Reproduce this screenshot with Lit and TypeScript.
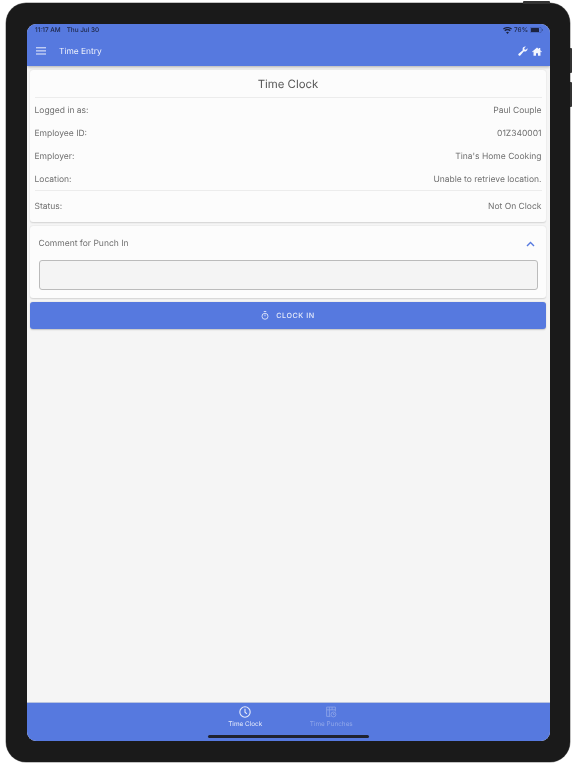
import { LitElement, html, css } from "lit";
import { customElement } from "lit/decorators.js";

@customElement("app-root")
export class AppRoot extends LitElement {
  static styles = css`
    :host { display: block; width: 576px; height: 768px; background: #fff; position: relative; overflow: hidden;
      font-family: Inter, "Liberation Sans", sans-serif; color: #666; text-rendering: geometricPrecision; }
    * { box-sizing: border-box; }
    .outer { padding: 3px 6px 6px 6px; height: 768px; filter: blur(.25px); }
    .device { height: 759px; background: #1a1a1a; border-radius: 20px; padding: 21px 20px 21px 20.5px; box-shadow: 0 0 0 .5px #888; }
    .screen { height: 717px; border-radius: 9px; overflow: hidden; background: #f5f5f5; display: flex; flex-direction: column; }
    .btn { position: absolute; background: #333; }
    .b-top { left: 523px; top: 1px; width: 27px; height: 3px; border-radius: 1px 1px 0 0; }
    .b-v1 { left: 570px; top: 48px; width: 2px; height: 25px; border-radius: 0 1px 1px 0; }
    .b-v2 { left: 570px; top: 81.5px; width: 2px; height: 25px; border-radius: 0 1px 1px 0; }
    .head { height: 42px; background: #5679df; flex: none; box-shadow: 0 1px 3px rgba(0,0,0,.3); position: relative; z-index: 1; }
    .status { height: 12px; display: flex; align-items: center; justify-content: space-between; padding: 0 7px 0 8.5px; font-size: 6.4px; font-weight: 500; color: #1c2340; }
    .status .l { display: flex; gap: 6px; }
    .status .r { display: flex; align-items: center; gap: 2px; }
    .bar { height: 30px; display: flex; align-items: center; padding: 0 8px 0 9.5px; color: #eef1fc; font-size: 8.4px; }
    .bar .title { margin-left: 13px; flex: 1; padding-top: 1px; }
    .bar .icons { display: flex; gap: 4px; align-items: center; padding-right: .5px; }
    .content { flex: 1; padding: 4px 4px 4px 3.5px; display: flex; flex-direction: column; gap: 4px; }
    .card { background: #fcfcfc; border-radius: 3px; box-shadow: 0 .5px 1.5px rgba(0,0,0,.14); }
    .c1 { height: 152px; padding: 0 4.5px; font-size: 8.5px; }
    .c1 h1 { margin: 0; height: 28px; font-size: 11.4px; font-weight: 400; text-align: center; line-height: 28px; color: #555; border-bottom: .5px solid #ececec; }
    .row { height: 23px; display: flex; justify-content: space-between; align-items: center; color: #707070; padding-top: 2.5px; }
    .rows { border-bottom: .5px solid #ececec; }
    .status-row { height: 31px; padding-top: 1.5px; }
    .c2 { height: 72px; padding: 0 8.5px; }
    .c2 .h { height: 33.5px; display: flex; justify-content: space-between; align-items: center; font-size: 8.5px; color: #707070; padding-right: 3px; padding-top: 2.5px; }
    .input { height: 30px; background: #f4f4f4; border: 1px solid #bbb; border-radius: 3px; }
    .clock { height: 27px; background: #5679df; border-radius: 3px; color: #e9edfb; font-size: 7.2px; font-weight: 500; letter-spacing: .55px;
      display: flex; align-items: center; justify-content: center; gap: 7px; box-shadow: 0 .5px 1.5px rgba(0,0,0,.2); }
    .tabs { height: 39px; flex: none; background: #5679df; border-top: .5px solid #b9c4e0; display: flex; justify-content: center; position: relative; }
    .tab { width: 86px; display: flex; flex-direction: column; align-items: center; padding-top: 3px; font-size: 6.4px; color: #e8ecfb; gap: 1.5px; }
    .tab.off { color: #91a7e9; }
    .home { position: absolute; left: 181.5px; bottom: 3px; width: 161px; height: 3px; border-radius: 2px; background: #1f2230; }
  `;

  render() {
    return html`
      <div class="outer">
        <div class="device">
          <div class="screen">
            <div class="head">
              <div class="status">
                <div class="l"><span>11:17 AM</span><span>Thu Jul 30</span></div>
                <div class="r">
                  <svg width="9" height="7" viewBox="0 0 18 14" fill="#1c2340"><path d="M9 14 L6 10.400 A5 5 0 0 1 12 10.400 Z M4.500 8.600 L2.600 6.400 A10 10 0 0 1 15.400 6.400 L13.500 8.600 A7 7 0 0 0 4.500 8.600 Z M1.600 5.200 L0 3.200 A14 14 0 0 1 18 3.200 L16.400 5.200 A11.600 11.600 0 0 0 1.600 5.200 Z"/></svg>
                  <span>76%</span>
                  <svg width="13" height="6" viewBox="0 0 26 12"><rect x=".5" y=".5" width="22" height="11" rx="2.500" fill="none" stroke="#1c2340" stroke-opacity=".5"/><rect x="2" y="2" width="16" height="8" rx="1" fill="#1c2340"/><path d="M24 4 a2 2 0 0 1 0 4 z" fill="#1c2340" fill-opacity=".5"/></svg>
                </div>
              </div>
              <div class="bar">
                <svg width="10" height="8" viewBox="0 0 10 8" fill="#eef1fc"><rect y=".3" width="10" height="1"/><rect y="3.400" width="10" height="1"/><rect y="6.500" width="10" height="1"/></svg>
                <span class="title">Time Entry</span>
                <div class="icons">
                  <svg width="10" height="10" viewBox="0 0 24 24" fill="#f4f6fe"><path d="M23 6.500a6.500 6.500 0 0 1-8.800 6.100L5.500 22.600a2.600 2.600 0 0 1-3.900-.2 2.600 2.600 0 0 1-.1-3.700l10-8.800A6.500 6.500 0 0 1 19 1.200l-4 3.900.6 3.300 3.300.6 3.900-3.900c.1.400.2.900.2 1.400z"/></svg>
                  <svg width="10" height="9" viewBox="0 0 24 22" fill="#f4f6fe"><path d="M12 1 0 11.500l1.400 1.500L3.500 11.200V21.500h6v-6.500h5v6.500h6V11.200l2.100 1.800L24 11.500 20 8V2.500h-3.500v2.400z"/></svg>
                </div>
              </div>
            </div>
            <div class="content">
              <div class="card c1">
                <h1>Time Clock</h1>
                <div class="rows">
                  <div class="row"><span>Logged in as:</span><span>Paul Couple</span></div>
                  <div class="row"><span>Employee ID:</span><span>01Z340001</span></div>
                  <div class="row"><span>Employer:</span><span>Tina's Home Cooking</span></div>
                  <div class="row"><span>Location:</span><span>Unable to retrieve location.</span></div>
                </div>
                <div class="row status-row"><span>Status:</span><span>Not On Clock</span></div>
              </div>
              <div class="card c2">
                <div class="h"><span>Comment for Punch In</span>
                  <svg width="9" height="6" viewBox="0 0 9 6" fill="none" stroke="#5679df" stroke-width="1.400"><path d="M1 5 4.500 1.500 8 5"/></svg>
                </div>
                <div class="input"></div>
              </div>
              <div class="clock">
                <svg width="8" height="9" viewBox="0 0 16 18" fill="none" stroke="#e9edfb" stroke-width="1.700"><circle cx="8" cy="10.500" r="6"/><path d="M5.500 1h5M8 7v3.500"/></svg>
                <span>CLOCK IN</span>
              </div>
            </div>
            <div class="tabs">
              <div class="tab">
                <svg width="12" height="12" viewBox="0 0 22 22" fill="none" stroke="#e8ecfb" stroke-width="2"><circle cx="11" cy="11" r="9.500"/><path d="M11 5v6.500l3.500 3"/></svg>
                <span>Time Clock</span>
              </div>
              <div class="tab off">
                <svg width="12" height="12" viewBox="0 0 22 22" fill="none" stroke="#91a7e9" stroke-width="1.500"><path d="M10 19H3V2h16v8M3 7h16M8 2v17M13 2v5"/><circle cx="15.500" cy="15.500" r="4.500"/><path d="M15.500 13v2.500h2"/></svg>
                <span>Time Punches</span>
              </div>
              <div class="home"></div>
            </div>
          </div>
        </div>
      </div>
      <div class="btn b-top"></div>
      <div class="btn b-v1"></div>
      <div class="btn b-v2"></div>
    `;
  }
}
